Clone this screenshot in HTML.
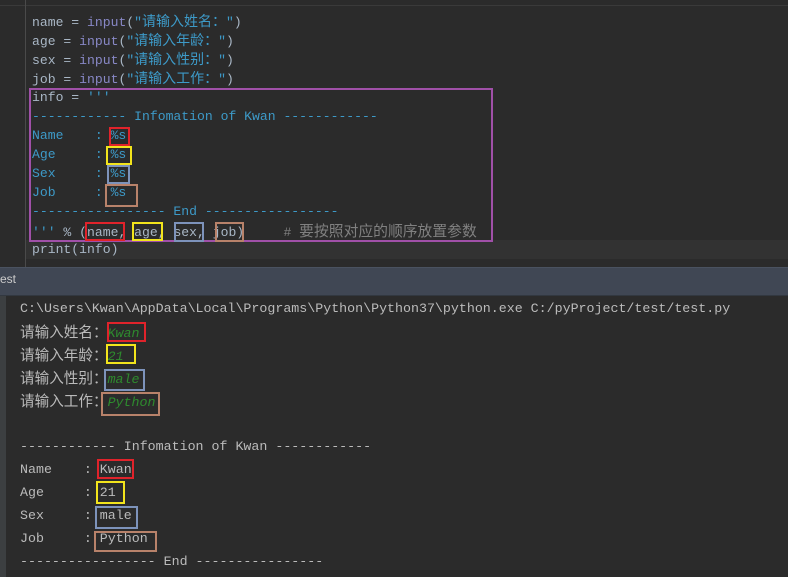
<!DOCTYPE html>
<html><head><meta charset="utf-8"><style>
*{margin:0;padding:0;box-sizing:border-box}
body{width:788px;height:577px;background:#2b2b2b;position:relative;overflow:hidden;font-family:"Liberation Mono","Noto Sans CJK SC",monospace}
.l{position:absolute;left:32px;height:19px;line-height:19px;font-size:13.1px;color:#a9b7c6;white-space:pre}
.l .k{font-size:14px;font-family:"Noto Sans CJK SC",sans-serif}
.l .k2{font-size:14.8px;font-family:"Noto Sans CJK SC",sans-serif}
.c{position:absolute;left:20px;height:23px;line-height:23px;font-size:13.3px;color:#bbbbbb;white-space:pre;font-family:"Liberation Mono","Noto Sans CJK SC",monospace}
.c .k{font-size:14.6px;font-family:"Noto Sans CJK SC",sans-serif}
.s{color:#3d9ac8}.b{color:#8888c6}.g{color:#808080}
.bx{position:absolute;border:2px solid}
.r{border-color:#e0232b}.y{border-color:#f2e41c}.u{border-color:#7d93bb}.o{border-color:#b8826a}
.in{color:#2e8b2e;font-style:italic}
</style></head><body>
<div style="position:absolute;left:0;top:5px;width:788px;height:1px;background:#3a3a3a"></div>
<div style="position:absolute;left:25px;top:0;width:1px;height:268px;background:#4a4a4a"></div>
<div style="position:absolute;left:26px;top:240px;width:762px;height:19px;background:#323232"></div>
<div class="l" style="top:12px">name = <span class="b">input</span>(<span class="s">"<span class="k">请输入姓名：</span>"</span>)</div>
<div class="l" style="top:31px">age = <span class="b">input</span>(<span class="s">"<span class="k">请输入年龄：</span>"</span>)</div>
<div class="l" style="top:50px">sex = <span class="b">input</span>(<span class="s">"<span class="k">请输入性别：</span>"</span>)</div>
<div class="l" style="top:69px">job = <span class="b">input</span>(<span class="s">"<span class="k">请输入工作：</span>"</span>)</div>
<div class="l" style="top:88px">info = <span class="s">'''</span></div>
<div class="l s" style="top:107px">------------ Infomation of Kwan ------------</div>
<div class="l s" style="top:126px">Name    : %s</div>
<div class="l s" style="top:145px">Age     : %s</div>
<div class="l s" style="top:164px">Sex     : %s</div>
<div class="l s" style="top:183px">Job     : %s</div>
<div class="l s" style="top:202px">----------------- End -----------------</div>
<div class="l" style="top:221px"><span class="s">'''</span> % (name, age, sex, job)     <span class="g"># <span class="k2">要按照对应的顺序放置参数</span></span></div>
<div class="l" style="top:240px">print(info)</div>
<div class="bx" style="left:29px;top:88px;width:464px;height:154px;border-color:#a050a8"></div>
<div class="bx r" style="left:109px;top:127px;width:21px;height:19px"></div>
<div class="bx y" style="left:106px;top:146px;width:26px;height:19px"></div>
<div class="bx u" style="left:107px;top:165px;width:23px;height:19px"></div>
<div class="bx o" style="left:105px;top:184px;width:33px;height:23px"></div>
<div class="bx r" style="left:85px;top:222px;width:40px;height:19px"></div>
<div class="bx y" style="left:132px;top:222px;width:31px;height:19px"></div>
<div class="bx u" style="left:174px;top:222px;width:30px;height:20px"></div>
<div class="bx o" style="left:215px;top:222px;width:29px;height:20px"></div>
<div style="position:absolute;left:0;top:267px;width:788px;height:29px;background:#404754;border-top:1px solid #4a5260;border-bottom:1px solid #323840"></div>
<div style="position:absolute;left:0;top:272px;font-size:12px;color:#ccc;font-family:'Liberation Sans',sans-serif">est</div>
<div style="position:absolute;left:0;top:296px;width:6px;height:281px;background:#3c3f41"></div>
<div class="c" style="top:297px">C:\Users\Kwan\AppData\Local\Programs\Python\Python37\python.exe C:/pyProject/test/test.py</div>
<div class="c" style="top:320px"><span class="k">请输入姓名：</span><span class="in">Kwan</span></div>
<div class="c" style="top:343px"><span class="k">请输入年龄：</span><span class="in">21</span></div>
<div class="c" style="top:366px"><span class="k">请输入性别：</span><span class="in">male</span></div>
<div class="c" style="top:389px"><span class="k">请输入工作：</span><span class="in">Python</span></div>
<div class="c" style="top:435px">------------ Infomation of Kwan ------------</div>
<div class="c" style="top:458px">Name    : Kwan</div>
<div class="c" style="top:481px">Age     : 21</div>
<div class="c" style="top:504px">Sex     : male</div>
<div class="c" style="top:527px">Job     : Python</div>
<div class="c" style="top:550px">----------------- End ----------------</div>
<div class="bx r" style="left:107px;top:322px;width:39px;height:20px"></div>
<div class="bx y" style="left:106px;top:344px;width:30px;height:20px"></div>
<div class="bx u" style="left:104px;top:369px;width:41px;height:22px"></div>
<div class="bx o" style="left:101px;top:392px;width:59px;height:24px"></div>
<div class="bx r" style="left:97px;top:459px;width:37px;height:20px"></div>
<div class="bx y" style="left:96px;top:481px;width:29px;height:23px"></div>
<div class="bx u" style="left:95px;top:506px;width:43px;height:23px"></div>
<div class="bx o" style="left:94px;top:531px;width:63px;height:21px"></div>
</body></html>
